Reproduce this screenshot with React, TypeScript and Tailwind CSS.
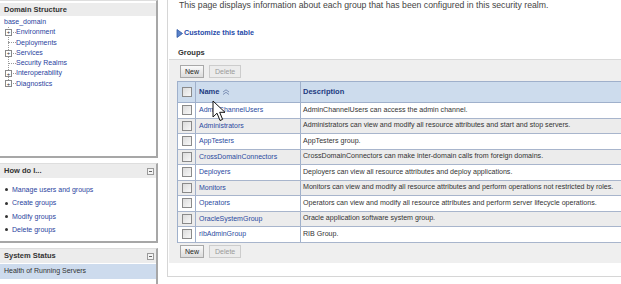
import React from "react";

const treeItems = [
  { name: "Environment", expand: true },
  { name: "Deployments", expand: false },
  { name: "Services", expand: true },
  { name: "Security Realms", expand: false },
  { name: "Interoperability", expand: true },
  { name: "Diagnostics", expand: true },
];

const howTo = ["Manage users and groups", "Create groups", "Modify groups", "Delete groups"];

const groups = [
  { name: "AdminChannelUsers", desc: "AdminChannelUsers can access the admin channel." },
  { name: "Administrators", desc: "Administrators can view and modify all resource attributes and start and stop servers." },
  { name: "AppTesters", desc: "AppTesters group." },
  { name: "CrossDomainConnectors", desc: "CrossDomainConnectors can make inter-domain calls from foreign domains." },
  { name: "Deployers", desc: "Deployers can view all resource attributes and deploy applications." },
  { name: "Monitors", desc: "Monitors can view and modify all resource attributes and perform operations not restricted by roles." },
  { name: "Operators", desc: "Operators can view and modify all resource attributes and perform server lifecycle operations." },
  { name: "OracleSystemGroup", desc: "Oracle application software system group." },
  { name: "ribAdminGroup", desc: "RIB Group." },
];

const MinIcon = () => (
  <span className="w-[7px] h-[7px] border border-[#9a9a9a] bg-[#f4f4f4] flex items-center justify-center">
    <span className="w-[3px] h-px bg-[#666]" />
  </span>
);

const CheckBox = () => (
  <span className="block w-[10px] h-[10px] border border-[#8a8a8a] bg-gradient-to-br from-[#dcdcdc] to-[#f8f8f8]" />
);

const Buttons = () => (
  <div className="flex gap-[5px] h-[13px]">
    <button className="px-[4px] text-[7px] text-[#222] border border-[#a8a8a8] bg-gradient-to-b from-[#fafafa] to-[#dcdcdc] leading-none">
      New
    </button>
    <button className="px-[5px] text-[7px] text-[#9a9a9a] border border-[#cccccc] bg-[#ececec] leading-none">
      Delete
    </button>
  </div>
);

const App: React.FC = (): JSX.Element => {
  return (
    <div className="w-[621px] h-[284px] overflow-hidden bg-white flex relative font-['Liberation_Sans',Arial,sans-serif]">
      {/* left column */}
      <div className="w-[158px] shrink-0 flex flex-col">
        <div className="h-[158px] border-t border-[#dedede] border-r-2 border-r-[#a7a7a7] border-b-2 border-b-[#a7a7a7] pt-[2px]">
          <div className="h-[13px] bg-[#ececec] flex items-center pl-[4px] text-[7.5px] font-bold text-[#333]">
            Domain Structure
          </div>
          <div className="pl-[4px] pt-[1px] text-[7px] text-[#2a3f9e] leading-[10.3px]">
            <div>base_domain</div>
            <div className="relative">
              <div className="absolute left-[4px] top-0 h-[57px] border-l border-dotted border-[#999]" />
              {treeItems.map((item, idx) => (
                <div key={idx + "tree"} className="flex items-center h-[10.3px]">
                  <div className="w-[12px] h-full relative flex items-center">
                    <span className="absolute left-[4px] w-[8px] border-t border-dotted border-[#999]" />
                    {item.expand && (
                      <span className="relative z-10 w-[7px] h-[7px] ml-[1px] border border-[#888] bg-white flex items-center justify-center text-[6px] leading-none text-[#333]">
                        +
                      </span>
                    )}
                  </div>
                  <span>{item.name}</span>
                </div>
              ))}
            </div>
          </div>
        </div>

        <div className="mt-[5px] h-[80px] border-t border-[#dedede] border-r-2 border-r-[#a7a7a7] border-b-2 border-b-[#a7a7a7]">
          <div className="h-[14px] bg-[#ececec] flex items-center justify-between pl-[4px] pr-[2px] text-[7.5px] font-bold text-[#333]">
            <span>How do I...</span>
            <MinIcon />
          </div>
          <ul className="pt-[5px] pl-[5px] text-[7px] text-[#2a3f9e] leading-[13.4px]">
            {howTo.map((t, idx) => (
              <li key={idx + "how"} className="flex items-center gap-[4px]">
                <span className="w-[3px] h-[3px] bg-[#333] rounded-full" />
                {t}
              </li>
            ))}
          </ul>
        </div>

        <div className="mt-[5px] flex-1 border-t border-[#dedede] border-r-2 border-r-[#a7a7a7]">
          <div className="h-[14px] bg-[#ececec] flex items-center justify-between pl-[4px] pr-[2px] text-[7.5px] font-bold text-[#333]">
            <span>System Status</span>
            <MinIcon />
          </div>
          <div className="h-[15px] mt-px bg-[#cddbed] flex items-center pl-[4px] text-[7px] text-[#333]">
            Health of Running Servers
          </div>
        </div>
      </div>

      {/* main */}
      <div className="ml-[9px] flex-1 flex flex-col border-l border-[#d6d6d6] h-[277px] border-b">
        <div className="pl-[11px] text-[8.7px] text-[#444] leading-[10px] whitespace-nowrap">
          This page displays information about each group that has been configured in this security realm.
        </div>
        <div className="mt-[18px] pl-[8px] flex items-center gap-[1px] text-[7.2px] font-bold text-[#1f4aa8]">
          <svg width="7" height="9" viewBox="0 0 7 9">
            <path d="M1 0.5 L6.5 4.5 L1 8.5 Z" fill="#5a82c8" stroke="#2f58a6" strokeWidth="0.8" />
          </svg>
          Customize this table
        </div>
        <div className="mt-[8px] pl-[10px] text-[7.5px] font-bold text-[#333]">Groups</div>
        <div className="mt-[1px] ml-[1px] h-[204px] bg-[#efefef] border-t border-[#d9d9d9] pt-[5px] pl-[11px] overflow-hidden">
          <Buttons />
          <div className="mt-[3px] -ml-[3px] w-[470px] border-l border-[#9fb0cb]">
            <div className="h-[22px] bg-[#cddced] border-y border-[#9fb0cb] grid grid-cols-[18px_105px_1fr] text-[7.5px] font-bold text-[#1c3a80]">
              <div className="flex items-center justify-center border-r border-[#9fb0cb]">
                <CheckBox />
              </div>
              <div className="flex items-center pl-[3px] gap-[3px] border-r border-[#9fb0cb]">
                Name
                <svg width="8" height="6" viewBox="0 0 8 6">
                  <path d="M1 3 L4 0.8 L7 3 M1 5.5 L4 3.3 L7 5.5" fill="none" stroke="#7c8fb5" strokeWidth="1" />
                </svg>
              </div>
              <div className="flex items-center pl-[2px]">Description</div>
            </div>
            {groups.map((g, idx) => (
              <div
                key={idx + "grp"}
                className={`h-[15.5px] grid grid-cols-[18px_105px_1fr] border-b border-[#a8b5cc] ${
                  idx % 2 === 1 ? "bg-[#ececec]" : "bg-white"
                }`}
              >
                <div className="flex items-center justify-center border-r border-[#9fb0cb]">
                  <CheckBox />
                </div>
                <div className="flex items-center pl-[3px] border-r border-[#9fb0cb] text-[7px] text-[#2b4aa0]">
                  {g.name}
                </div>
                <div className="flex items-center pl-[2px] text-[7.1px] text-[#333] whitespace-nowrap">{g.desc}</div>
              </div>
            ))}
          </div>
          <div className="mt-[2px]">
            <Buttons />
          </div>
        </div>
      </div>

      {/* mouse cursor */}
      <svg className="absolute left-[212px] top-[100px]" width="14" height="22" viewBox="0 0 14 22">
        <path
          d="M1 1 L1 17 L5 13.2 L8 20.5 L10.6 19.4 L7.7 12.3 L13 12.3 Z"
          fill="white"
          stroke="#111"
          strokeWidth="1"
          strokeLinejoin="miter"
        />
      </svg>
    </div>
  );
};

export default App;
